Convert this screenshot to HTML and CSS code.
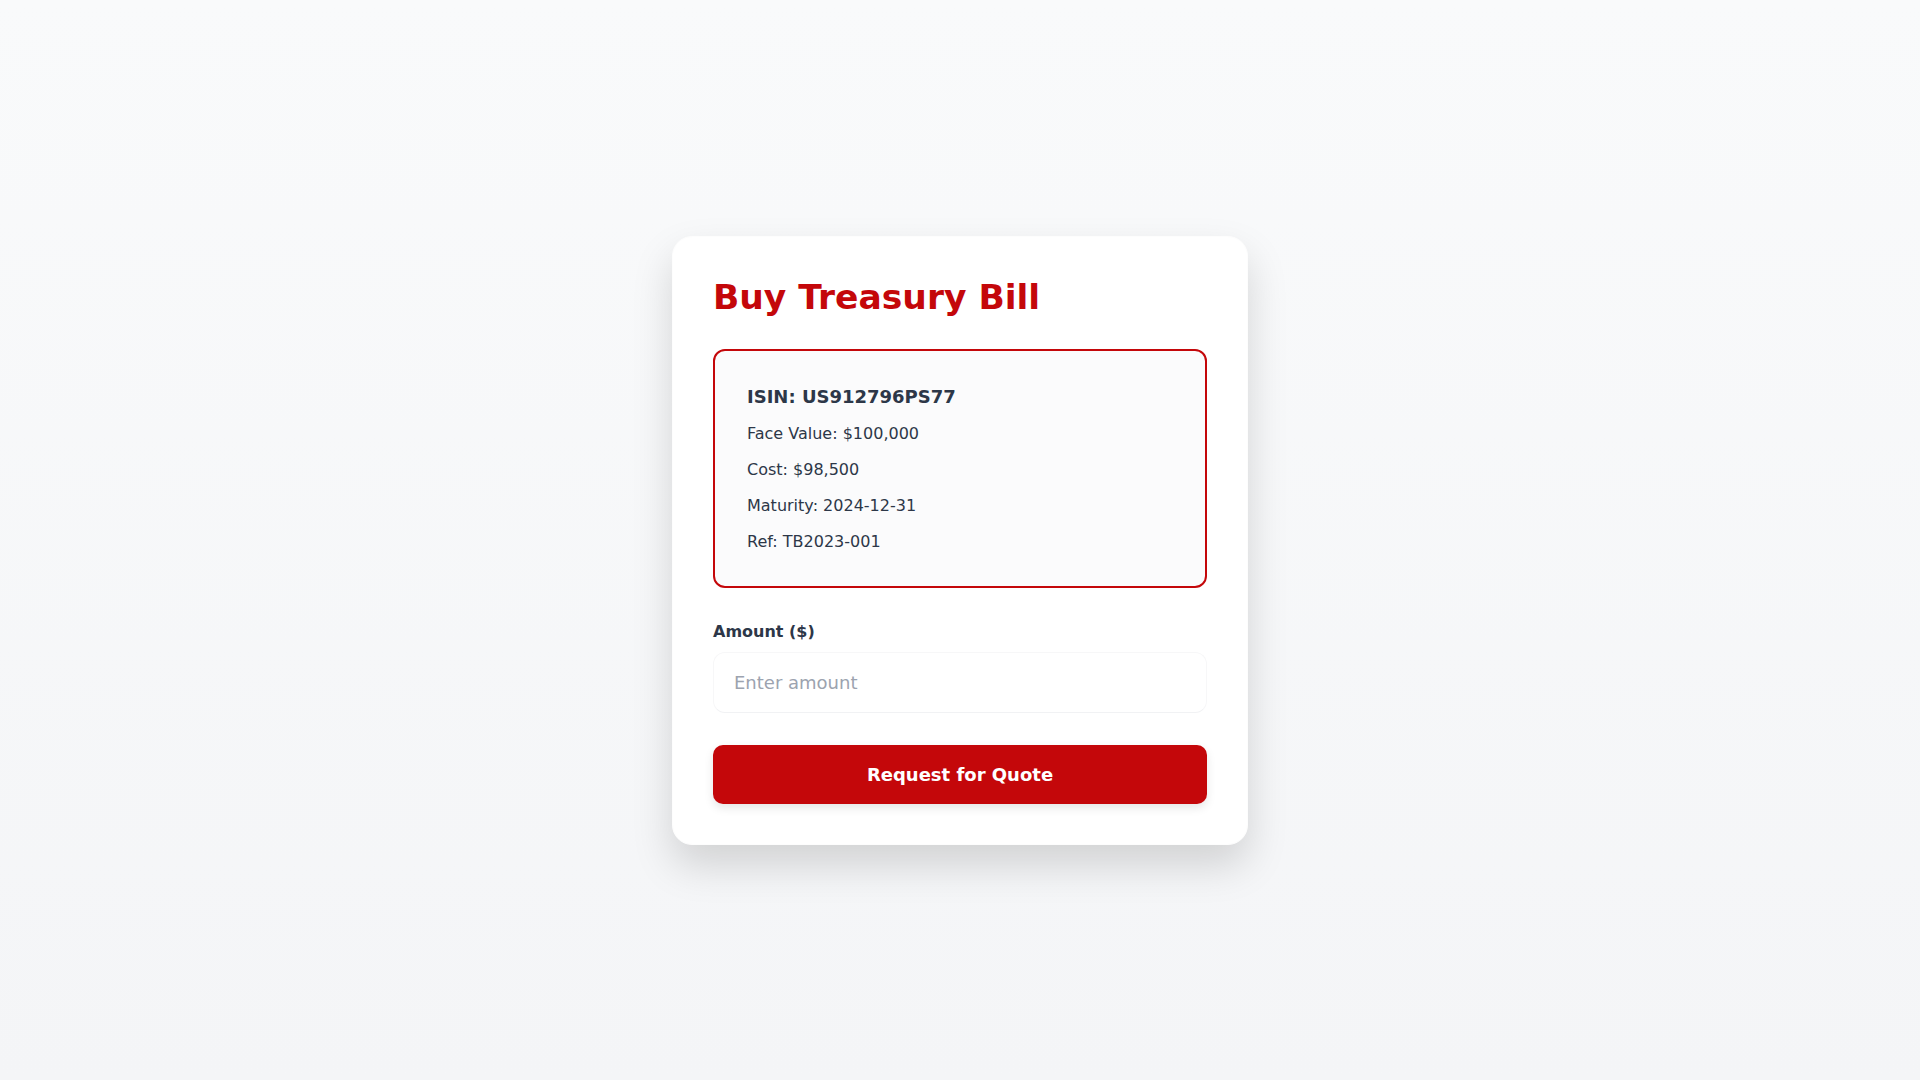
FILE: index.html
```html
<!DOCTYPE html>
<html lang="en">
<head>
<meta charset="utf-8">
<title>Buy Treasury Bill</title>
<link rel="stylesheet" href="styles.css">
</head>
<body>
<main class="card">
  <h1 class="title">Buy Treasury Bill</h1>
  <section class="bill">
    <h3 class="bill-isin">ISIN: US912796PS77</h3>
    <p class="bill-line">Face Value: $100,000</p>
    <p class="bill-line">Cost: $98,500</p>
    <p class="bill-line">Maturity: 2024-12-31</p>
    <p class="bill-line">Ref: TB2023-001</p>
  </section>
  <div class="field">
    <label class="field-label" for="amount">Amount ($)</label>
    <input class="field-input" id="amount" type="text" placeholder="Enter amount">
  </div>
  <button class="btn" type="button">Request for Quote</button>
</main>
</body>
</html>
```
FILE: styles.css
```css
* { box-sizing: border-box; }
html, body { height: 100%; }
body {
  margin: 0;
  min-height: 100vh;
  display: flex;
  align-items: center;
  justify-content: center;
  font-family: "DejaVu Sans", Verdana, sans-serif;
  line-height: 1.5;
  color: #2d3748;
  background: linear-gradient(180deg, #f9fafb 0%, #f4f5f7 100%);
}
.card {
  width: 576px;
  padding: 40px;
  background: #ffffff;
  border: 1px solid #fdfdfd;
  border-radius: 20px;
  box-shadow: 0 20px 40px rgba(0, 0, 0, 0.15);
}
.title {
  margin: 0 0 32px;
  font-size: 34.5px;
  font-weight: 700;
  line-height: normal;
  color: #c4070a;
}
.bill {
  border: 2px solid #c4070a;
  border-radius: 12px;
  padding: 32px;
  background: #fbfbfc;
  margin-bottom: 32px;
}
.bill-isin {
  margin: 0 0 12px;
  font-size: 18px;
  font-weight: 700;
  color: #2d3748;
}
.bill-line {
  margin: 0 0 12px;
  font-size: 16px;
  color: #2d3748;
}
.bill-line:last-child { margin-bottom: 0; }
.field { margin-bottom: 32px; }
.field-label {
  display: block;
  margin-bottom: 8px;
  font-size: 16px;
  font-weight: 700;
  color: #2d3748;
}
.field-input {
  display: block;
  width: 100%;
  padding: 16px 20px;
  border: 1px solid #f7f7f8;
  border-bottom-color: #f1f2f4;
  border-radius: 12px;
  background: #ffffff;
  font-family: inherit;
  font-size: 18px;
  line-height: 1.5;
  color: #2d3748;
  outline: none;
}
.field-input::placeholder { color: #9ca3af; }
.btn {
  display: block;
  width: 100%;
  padding: 16px;
  border: none;
  border-radius: 10px;
  background: #c4070a;
  color: #ffffff;
  font-family: inherit;
  font-size: 18px;
  font-weight: 700;
  line-height: 1.5;
  cursor: pointer;
  box-shadow: 0 4px 10px rgba(0, 0, 0, 0.1);
}
```
